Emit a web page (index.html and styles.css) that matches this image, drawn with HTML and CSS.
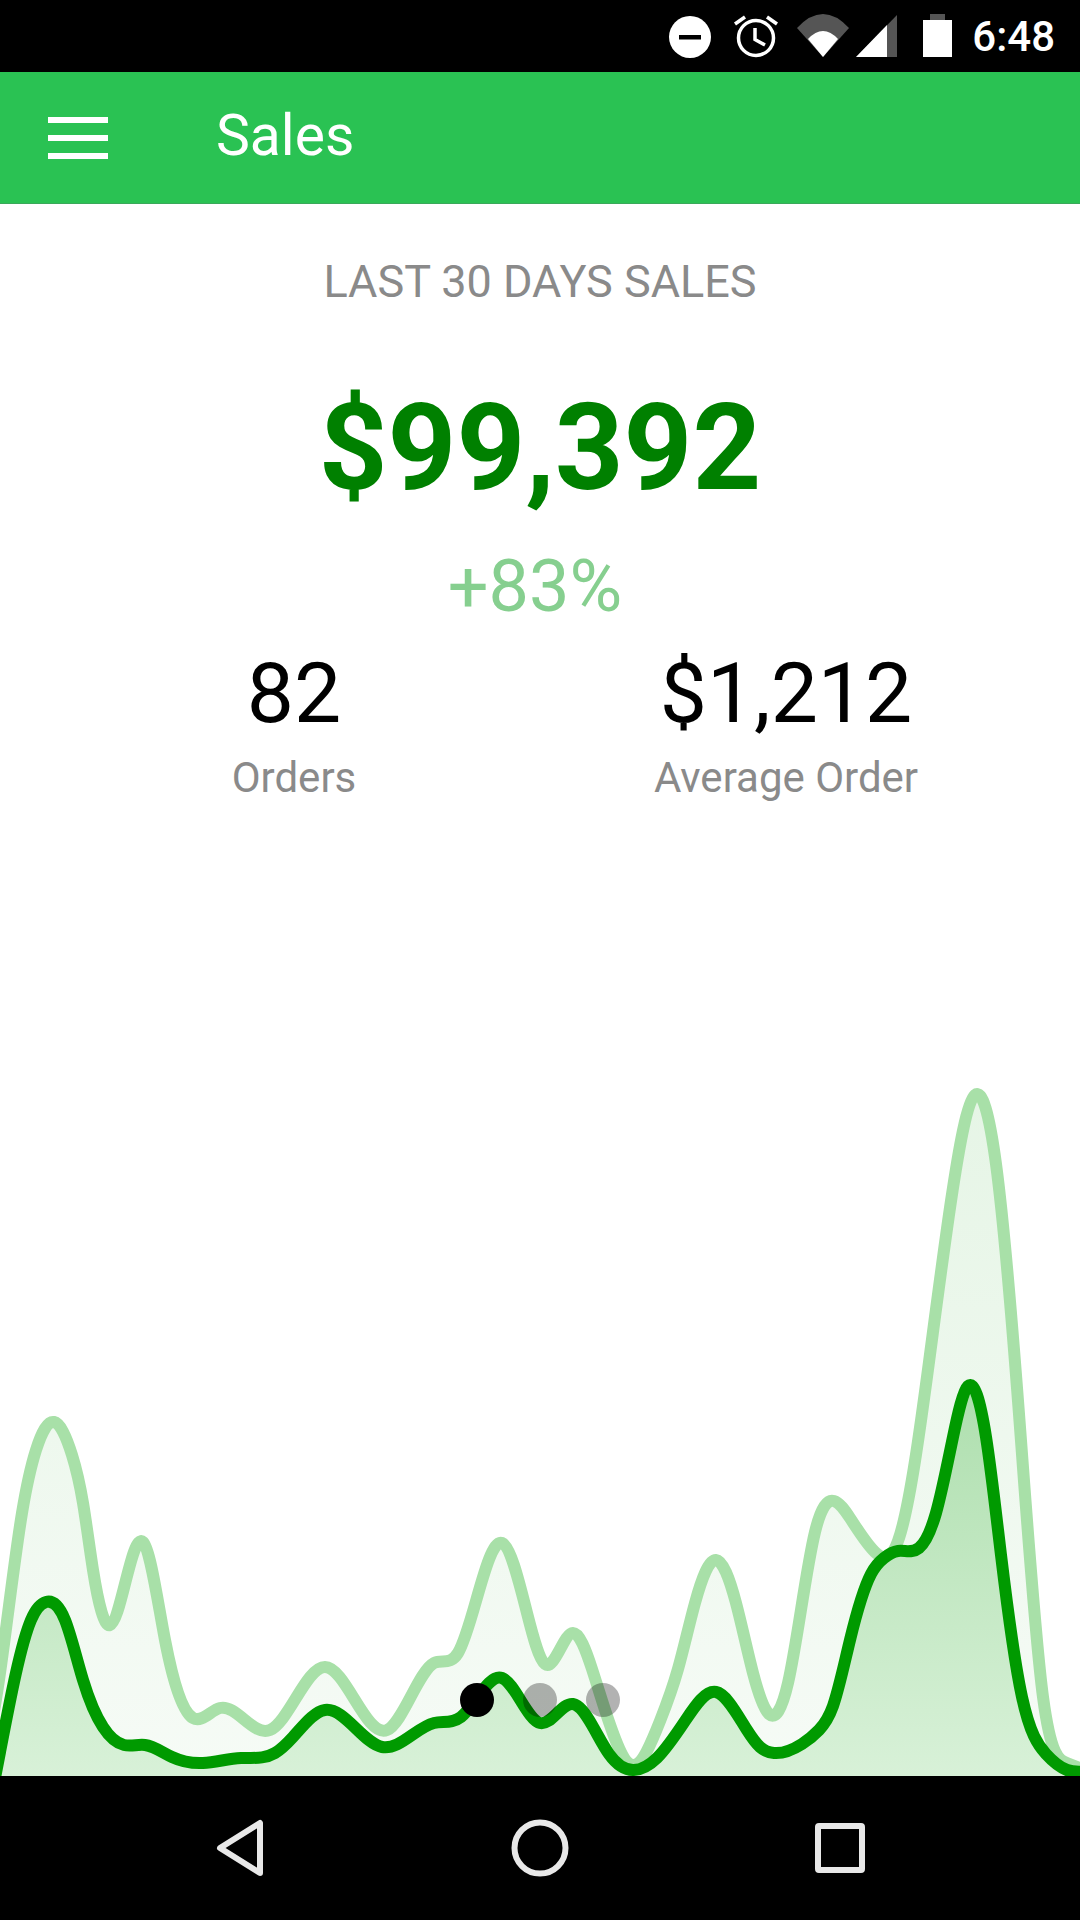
FILE: index.html
```html
<!DOCTYPE html>
<html lang="en">
<head>
    <meta charset="UTF-8">
    <meta name="viewport" content="width=device-width, initial-scale=1.0">
    <title>Sales</title>
    <link rel="stylesheet" href="styles.css">
</head>
<body>
    <!-- Status bar -->
    <div class="status-bar">
        <svg class="status-icons" viewBox="669 0 283 72" width="283" height="72">
            <circle cx="690" cy="37" r="21" fill="#fff"/>
            <rect x="679" y="35" width="22" height="4.5" fill="#000"/>
            <circle cx="756" cy="38" r="17.5" fill="none" stroke="#fff" stroke-width="3.5"/>
            <path d="M755 28v11.5l10 5.5M735 24l10-7M777 24l-10-7" fill="none" stroke="#fff" stroke-width="3.5"/>
            <path d="M797 28Q823 0 849 28L823 57Z" fill="#555"/>
            <path d="M808 39Q823 23 838 39L823 57Z" fill="#fff"/>
            <path d="M856 57L897 15V57Z" fill="#555"/>
            <path d="M856 57L887 25V57Z" fill="#fff"/>
            <rect x="930" y="14" width="15" height="6" fill="#555"/>
            <rect x="923" y="20" width="29" height="37" fill="#fff"/>
        </svg>
        <span class="clock">6:48</span>
    </div>

    <!-- App bar -->
    <header class="app-bar">
        <div class="menu-icon"><span></span><span></span><span></span></div>
        <h1>Sales</h1>
    </header>

    <!-- Summary and chart -->
    <main class="content">
        <div class="period">LAST 30 DAYS SALES</div>
        <div class="total">$99,392</div>
        <div class="change">+83%</div>
        <div class="stats">
            <div class="stat">
                <div class="stat-value">82</div>
                <div class="stat-label">Orders</div>
            </div>
            <div class="stat">
                <div class="stat-value">$1,212</div>
                <div class="stat-label">Average Order</div>
            </div>
        </div>

        <div class="chart">
            <svg viewBox="0 1060 1080 716" width="1080" height="716">
                <defs>
                    <linearGradient id="lightFill" gradientUnits="userSpaceOnUse" x1="0" y1="1095" x2="0" y2="1776">
                        <stop offset="0" stop-color="#e6f5e6"/>
                        <stop offset="1" stop-color="#f6fbf6"/>
                    </linearGradient>
                    <linearGradient id="darkFill" gradientUnits="userSpaceOnUse" x1="0" y1="1386" x2="0" y2="1776">
                        <stop offset="0" stop-color="#aedfae"/>
                        <stop offset="1" stop-color="#d8f1d8"/>
                    </linearGradient>
                </defs>
                <path id="lightArea" fill="url(#lightFill)"/>
                <path id="lightLine" class="line line-light"/>
                <path id="darkArea" fill="url(#darkFill)"/>
                <path id="darkLine" class="line line-dark"/>
            </svg>
            <div class="pager">
                <span class="dot active"></span>
                <span class="dot"></span>
                <span class="dot"></span>
            </div>
        </div>
    </main>

    <!-- Navigation bar -->
    <nav class="nav-bar">
        <svg viewBox="0 0 48 60" width="48" height="60">
            <path d="M44 5V55L4 30Z" fill="none" stroke="#e8e8e8" stroke-width="6" stroke-linejoin="round"/>
        </svg>
        <svg viewBox="0 0 60 60" width="60" height="60">
            <circle cx="30" cy="30" r="25.5" fill="none" stroke="#e8e8e8" stroke-width="6"/>
        </svg>
        <svg viewBox="0 0 52 52" width="52" height="52">
            <rect x="4" y="4" width="44" height="44" rx="1" fill="none" stroke="#e8e8e8" stroke-width="6" stroke-linejoin="round"/>
        </svg>
    </nav>

    <script src="chart.js"></script>
</body>
</html>
```

FILE: styles.css
```css
* {
    box-sizing: border-box;
}
body {
    margin: 0;
    width: 1080px;
    height: 1920px;
    display: flex;
    flex-direction: column;
    overflow: hidden;
    font-family: Roboto, sans-serif;
    background-color: #fff;
}
.status-bar {
    height: 72px;
    flex: none;
    display: flex;
    justify-content: flex-end;
    align-items: center;
    padding-right: 25px;
    background-color: #000;
    color: #fff;
}
.status-icons {
    display: block;
}
.clock {
    margin-left: 20px;
    font-size: 42px;
    font-weight: 500;
    line-height: 72px;
    position: relative;
    top: 1px;
}
.app-bar {
    height: 132px;
    flex: none;
    display: flex;
    align-items: center;
    padding-left: 48px;
    background-color: #2ac253;
    border-bottom: 1px solid #3aa85a;
    color: #fff;
}
.app-bar h1 {
    margin: 0 0 3px 108px;
    font-size: 57px;
    font-weight: 400;
    line-height: 64px;
}
.menu-icon {
    width: 60px;
    display: flex;
    flex-direction: column;
    gap: 12px;
}
.menu-icon span {
    height: 6px;
    background-color: #fff;
}
.content {
    flex: 1;
    display: flex;
    flex-direction: column;
    align-items: center;
    padding-top: 53px;
    min-height: 0;
}
.period {
    font-size: 45px;
    line-height: 50px;
    color: #8a8a8a;
}
.total {
    margin-top: 71px;
    font-size: 120px;
    font-weight: 700;
    line-height: 140px;
    color: #008000;
}
.change {
    margin-top: 27px;
    font-size: 72px;
    line-height: 84px;
    color: #86cf8f;
    padding-right: 10px;
}
.stats {
    margin-top: 17px;
    width: 984px;
    display: grid;
    grid-template-columns: 1fr 1fr;
    text-align: center;
}
.stat-value {
    font-size: 84px;
    line-height: 96px;
    color: #000;
}
.stat-label {
    margin-top: 12px;
    font-size: 42px;
    line-height: 48px;
    color: #8a8a8a;
}
.chart {
    margin-top: auto;
    position: relative;
    width: 1080px;
    height: 716px;
    flex: none;
}
.chart svg {
    display: block;
}
.line {
    fill: none;
    stroke-width: 12;
    stroke-linejoin: round;
}
.line-light {
    stroke: #a8e0a8;
}
.line-dark {
    stroke: #009a00;
}
.pager {
    position: absolute;
    left: 0;
    right: 0;
    bottom: 59px;
    display: flex;
    justify-content: center;
    gap: 29px;
}
.dot {
    width: 34px;
    height: 34px;
    border-radius: 50%;
    background-color: rgba(0, 0, 0, 0.3);
}
.dot.active {
    background-color: #000;
}
.nav-bar {
    height: 144px;
    flex: none;
    display: grid;
    grid-template-columns: repeat(3, 300px);
    justify-content: center;
    justify-items: center;
    align-items: center;
    background-color: #000;
}
```

FILE: chart.js
```js
// Sales points as x, y in page pixels
const lightPoints = [
    [-20, 1790], [0, 1673], [22, 1513], [36, 1450], [54, 1422], [72, 1455], [83, 1503], [93, 1570], [110, 1625],
    [143, 1542], [165, 1640], [193, 1718], [220, 1708], [270, 1730], [325, 1667], [387, 1730],
    [434, 1663], [458, 1653], [502, 1543], [527, 1613], [545, 1664], [573, 1633], [592, 1669],
    [633, 1765], [660, 1721], [678, 1669], [695, 1603], [716, 1560], [736, 1603], [753, 1673],
    [769, 1714], [788, 1683], [815, 1532], [834, 1501], [850, 1518], [876, 1553], [898, 1541],
    [915, 1461], [929, 1362], [951, 1201], [975, 1095], [996, 1164], [1019, 1414], [1043, 1697],
    [1067, 1763], [1090, 1772]
];
const darkPoints = [
    [-15, 1830], [0, 1752], [31, 1620], [46, 1602], [65, 1620], [83, 1680], [103, 1727], [124, 1745],
    [145, 1745], [172, 1757], [203, 1763], [241, 1758], [275, 1753], [293, 1737], [325, 1710],
    [382, 1747], [434, 1723], [461, 1717], [502, 1678], [540, 1723], [573, 1704], [592, 1725],
    [609, 1754], [633, 1770], [657, 1758], [685, 1721], [716, 1692], [747, 1730], [760, 1747],
    [774, 1753], [802, 1744], [819, 1730], [833, 1706], [850, 1640], [871, 1574], [884, 1558],
    [898, 1551], [919, 1548], [936, 1513], [953, 1437], [968, 1386], [986, 1437], [1001, 1555],
    [1022, 1697], [1046, 1754], [1067, 1770], [1090, 1771]
];

// Natural cubic spline: second derivatives at each point
function secondDerivatives(points) {
    const n = points.length;
    const u = new Array(n).fill(0);
    const y2 = new Array(n).fill(0);
    for (let i = 1; i < n - 1; i++) {
        const sig = (points[i][0] - points[i - 1][0]) / (points[i + 1][0] - points[i - 1][0]);
        const p = sig * y2[i - 1] + 2;
        y2[i] = (sig - 1) / p;
        const d = (points[i + 1][1] - points[i][1]) / (points[i + 1][0] - points[i][0])
            - (points[i][1] - points[i - 1][1]) / (points[i][0] - points[i - 1][0]);
        u[i] = (6 * d / (points[i + 1][0] - points[i - 1][0]) - sig * u[i - 1]) / p;
    }
    for (let i = n - 2; i >= 0; i--) {
        y2[i] = y2[i] * y2[i + 1] + u[i];
    }
    return y2;
}

function smoothPath(points) {
    const y2 = secondDerivatives(points);
    let d = `M${points[0][0]} ${points[0][1]}`;
    for (let i = 0; i < points.length - 1; i++) {
        const [xa, ya] = points[i];
        const [xb, yb] = points[i + 1];
        const h = xb - xa;
        const m1 = (yb - ya) / h - h * (2 * y2[i] + y2[i + 1]) / 6;
        const m2 = (yb - ya) / h + h * (y2[i] + 2 * y2[i + 1]) / 6;
        d += `C${xa + h / 3} ${ya + m1 * h / 3} ${xb - h / 3} ${yb - m2 * h / 3} ${xb} ${yb}`;
    }
    return d;
}

function drawSeries(points, lineId, areaId) {
    const line = smoothPath(points);
    const first = points[0][0];
    const last = points[points.length - 1][0];
    document.getElementById(lineId).setAttribute('d', line);
    document.getElementById(areaId).setAttribute('d', `${line}L${last} 1776L${first} 1776Z`);
}

drawSeries(lightPoints, 'lightLine', 'lightArea');
drawSeries(darkPoints, 'darkLine', 'darkArea');
```
